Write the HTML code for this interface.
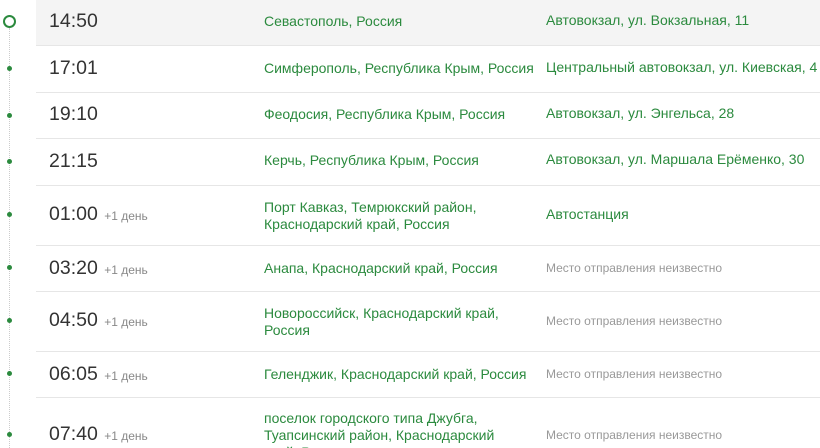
<!DOCTYPE html>
<html><head><meta charset="utf-8"><style>
html,body{margin:0;width:820px;height:448px;overflow:hidden}
body{background:#fff;font-family:"Liberation Sans",sans-serif;position:relative}
.row{position:absolute;left:36px;right:0;border-bottom:1px solid #e6e6e6}
.t{position:absolute;left:13px;font-size:19.5px;color:#333;white-space:nowrap}
.t small{font-size:12px;color:#888;margin-left:1px}
.c{position:absolute;left:228px;font-size:14px;color:#2b8a3e;line-height:17px;width:270px}
.a{position:absolute;left:510px;font-size:14px;color:#2b8a3e;white-space:nowrap}
.u{position:absolute;left:510px;font-size:12px;color:#999;white-space:nowrap}
.dot{position:absolute;left:7px;width:5px;height:5px;border-radius:50%;background:#2b8a3e}
.line{position:absolute;left:9px;top:28px;height:420px;border-left:1px dotted #ccc}
</style></head><body>
<div class="line"></div>
<div style="position:absolute;left:3px;top:15px;width:9px;height:9px;border:2px solid #2b8a3e;border-radius:50%;background:#fff"></div>
<div class="row" style="top:0;height:45px;background:#f4f4f4"><div class="t" style="top:10px">14:50</div><div class="c" style="top:13px">Севастополь, Россия</div><div class="a" style="top:12px">Автовокзал, ул. Вокзальная, 11</div></div>
<div class="dot" style="top:66px"></div>
<div class="row" style="top:46px;height:46px"><div class="t" style="top:11px">17:01</div><div class="c" style="top:14px">Симферополь, Республика Крым, Россия</div><div class="a" style="top:13px">Центральный автовокзал, ул. Киевская, 4</div></div>
<div class="dot" style="top:113px"></div>
<div class="row" style="top:93px;height:45px"><div class="t" style="top:10px">19:10</div><div class="c" style="top:13px">Феодосия, Республика Крым, Россия</div><div class="a" style="top:12px">Автовокзал, ул. Энгельса, 28</div></div>
<div class="dot" style="top:159px"></div>
<div class="row" style="top:139px;height:46px"><div class="t" style="top:11px">21:15</div><div class="c" style="top:13px">Керчь, Республика Крым, Россия</div><div class="a" style="top:12px">Автовокзал, ул. Маршала Ерёменко, 30</div></div>
<div class="dot" style="top:212px"></div>
<div class="row" style="top:186px;height:59px"><div class="t" style="top:17px">01:00 <small>+1 день</small></div><div class="c" style="top:13px">Порт Кавказ, Темрюкский район,<br>Краснодарский край, Россия</div><div class="a" style="top:20px">Автостанция</div></div>
<div class="dot" style="top:265px"></div>
<div class="row" style="top:246px;height:45px"><div class="t" style="top:11px">03:20 <small>+1 день</small></div><div class="c" style="top:14px">Анапа, Краснодарский край, Россия</div><div class="u" style="top:15px">Место отправления неизвестно</div></div>
<div class="dot" style="top:318px"></div>
<div class="row" style="top:292px;height:59px"><div class="t" style="top:17px">04:50 <small>+1 день</small></div><div class="c" style="top:13px">Новороссийск, Краснодарский край,<br>Россия</div><div class="u" style="top:22px">Место отправления неизвестно</div></div>
<div class="dot" style="top:371px"></div>
<div class="row" style="top:352px;height:45px"><div class="t" style="top:11px">06:05 <small>+1 день</small></div><div class="c" style="top:14px">Геленджик, Краснодарский край, Россия</div><div class="u" style="top:15px">Место отправления неизвестно</div></div>
<div class="dot" style="top:432px"></div>
<div class="row" style="top:398px;height:50px;border:none;overflow:hidden"><div class="t" style="top:25px">07:40 <small>+1 день</small></div><div class="c" style="top:12px">поселок городского типа Джубга,<br>Туапсинский район, Краснодарский<br>край, Россия</div><div class="u" style="top:30px">Место отправления неизвестно</div></div>
</body></html>
